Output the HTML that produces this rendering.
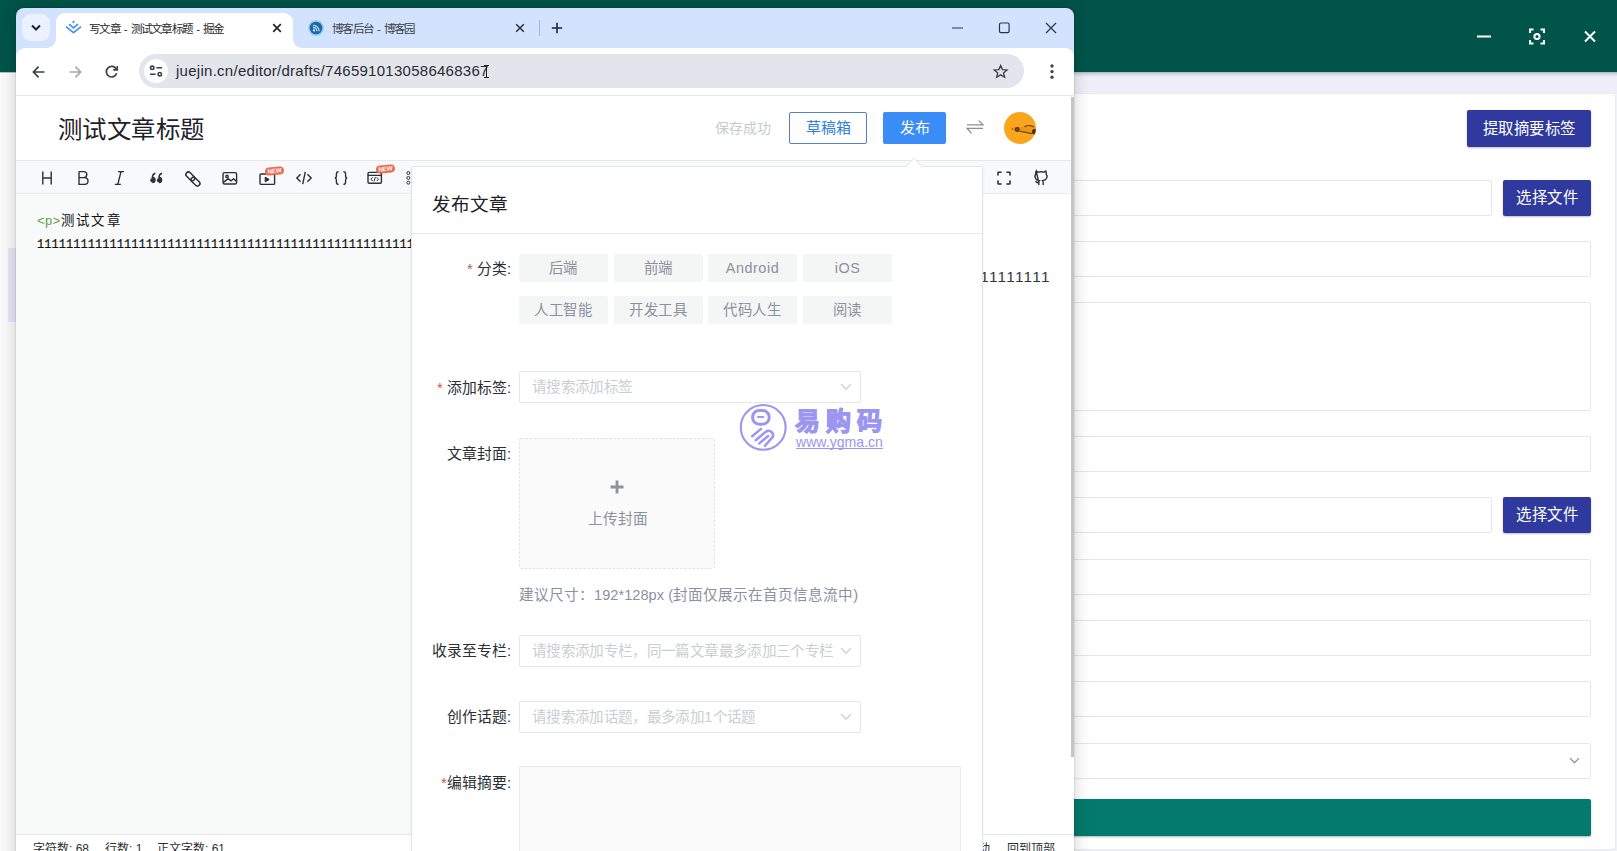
<!DOCTYPE html>
<html lang="zh-CN">
<head>
<meta charset="utf-8">
<title>写文章 - 测试文章标题 - 掘金</title>
<style>
*{box-sizing:border-box;margin:0;padding:0}
html,body{width:1617px;height:851px;overflow:hidden;background:#fff;font-family:"Liberation Sans",sans-serif;}
.abs{position:absolute}
#root{position:relative;width:1617px;height:851px;overflow:hidden;background:#f1f1f8}
/* ---------- background app (right / behind) ---------- */
#app-green{left:0;top:0;width:1617px;height:72.5px;background:#00544a}
#app-strip{left:0;top:73px;width:1617px;height:20px;background:#efeef9}
#app-strip-shadow{left:0;top:72px;width:1617px;height:5px;background:linear-gradient(#aab9b8,#d6dadf 45%,#efeef9)}
#app-card{left:0;top:93px;width:1616px;height:757px;background:#fff;border:1px solid #e9e9f0;border-left:0;border-radius:0 4px 4px 0}
#app-left{left:0;top:73px;width:16px;height:780px;background:#fafafa}
#app-left-sel{left:8px;top:248px;width:8px;height:74px;background:#e8e6f5}
.ibtn{background:#303a9e;color:#fff;font-size:15.4px;letter-spacing:.5px;text-align:center;border-radius:2px;box-shadow:0 1px 2px rgba(0,0,0,.25)}
.inp{border:1px solid #e6e6e6;border-radius:2px;background:#fff;left:1000px}
/* ---------- browser window ---------- */
#win{left:16px;top:8px;width:1058px;height:860px;border-radius:8px 8px 0 0;background:#d3e3fd;box-shadow:0 0 18px 1px rgba(0,0,0,.16),0 0 2px rgba(0,0,0,.28);overflow:hidden}
#tab1{left:40px;top:5px;width:237px;height:35px;background:#fff;border-radius:9px 9px 0 0}
#tab1:before,#tab1:after{content:"";position:absolute;bottom:0;width:9px;height:9px}
#tab1:before{left:-9px;background:radial-gradient(circle at 0 0,rgba(255,255,255,0) 8.5px,#fff 9px)}
#tab1:after{right:-9px;background:radial-gradient(circle at 100% 0,rgba(255,255,255,0) 8.5px,#fff 9px)}
#tabsearch{left:6px;top:6px;width:28px;height:27px;border-radius:9px;background:#ebf1fd}
.tabtxt{font-size:11.5px;color:#1f1f1f;white-space:nowrap;line-height:14px;letter-spacing:-.75px;word-spacing:1.5px}
#toolbar{left:0;top:40px;width:1058px;height:48px;background:#fff;border-radius:9px 9px 0 0;border-bottom:1px solid #e4e4e4}
#omni{left:123px;top:46px;width:885px;height:34px;border-radius:17px;background:#e2e5ec}
#omni-ic{left:128px;top:51px;width:24px;height:24px;border-radius:12px;background:#fff}
#url{left:160px;top:53px;font-size:15px;line-height:20px;color:#2a2c30;white-space:nowrap;letter-spacing:.27px}
/* ---------- page ---------- */
#page{left:0;top:88px;width:1058px;height:772px;background:#fff;overflow:hidden}
#ptitle{left:41.5px;top:17px;font-size:24.4px;letter-spacing:.6px;line-height:34px;color:#1d2129;white-space:nowrap}
#saved{left:699px;top:22px;font-size:14px;line-height:20px;color:#c6cacf;white-space:nowrap}
#draftbtn{left:773px;top:16px;width:78px;height:32px;border:1px solid #4d86c4;border-radius:2px;color:#2f7fe0;font-size:15px;line-height:30px;text-align:center;background:#fff}
#pubbtn{left:867px;top:16px;width:63px;height:32px;border-radius:2px;color:#fff;font-size:15px;line-height:32px;text-align:center;background:#3a8df6}
#avatar{left:987.5px;top:15.5px;width:32.6px;height:32.6px;border-radius:50%;background:#f9a61d;overflow:hidden}
#hline{left:0;top:64px;width:1058px;height:1px;background:#e6e7ea}
#tools{left:0;top:65px;width:1058px;height:33px;background:#f8f9fa;border-bottom:1px solid #e9ebee}
#edit{left:0;top:99px;width:1058px;height:640px;background:#f8faf9}
.mono{font-family:"Liberation Mono",monospace;font-size:12px;line-height:16px;color:#111;white-space:nowrap}
#status{left:0;top:738px;width:1058px;height:40px;background:#fff;border-top:1px solid #e6e7ea}
.st{font-size:12px;color:#2b2f36;line-height:14px;white-space:nowrap;top:746px}
#scroll{left:1055px;top:1px;width:3px;height:660px;background:#c4c5c7}
/* ---------- modal ---------- */
#modal{left:395px;top:71px;width:572px;height:720px;background:#fff;border:1px solid #e1e3e6;border-top-color:#fff;border-radius:2px;box-shadow:0 -1px 0 0 #e4e6e9,0 1px 4px rgba(0,0,0,.05)}
#mtitle{left:20px;top:24px;font-size:18.6px;line-height:26px;color:#1d2129;white-space:nowrap}
#mline{left:0;top:65px;width:570px;height:1px;background:#e8eaed}
.lab{font-size:14.8px;line-height:20px;color:#2a2e35;white-space:nowrap;text-align:right;width:120px;left:-21px;letter-spacing:0}
.lab i{font-style:normal;color:#c9554a}
.cat{width:89px;height:28px;background:#f4f5f5;border-radius:2px;color:#8a919f;font-size:14.4px;letter-spacing:.55px;line-height:28px;text-align:center;white-space:nowrap}
.sel{left:107px;width:342px;height:32px;border:1px solid #e5e6e9;border-radius:2px;background:#fff;font-size:14.5px;line-height:30px;color:#cacdd3;letter-spacing:.35px;padding-left:12px;white-space:nowrap;overflow:hidden}
.chev{position:absolute;right:8px;top:11px}
#cover{left:107px;top:270px;width:196px;height:131px;border-radius:2px;background:#fafafa}
#hint{left:107px;top:417px;font-size:14.6px;line-height:20px;color:#8a919f;white-space:nowrap;letter-spacing:.02px}
#summ{left:107px;top:598px;width:442px;height:130px;border:1px solid #e9eaec;border-radius:2px;background:#fafafa}
svg{display:block;overflow:visible}
.newb{background:#ef6a52;color:#fff;font-size:6.2px;line-height:8px;height:8px;padding:0 2.5px;border-radius:4px;font-weight:bold;transform:rotate(-6deg);letter-spacing:-.2px}
#wm{left:325px;top:233px;width:150px;height:52px}
</style>
</head>
<body>
<div id="root">
  <!-- background application -->
  <div class="abs" id="app-green"></div>
  <div class="abs" id="app-strip"></div>
  <div class="abs" id="app-strip-shadow"></div>
  <div class="abs" id="app-card"></div>
  <div class="abs" id="app-left"></div>
  <div class="abs" id="app-left-sel"></div>

  <!-- app window controls -->
  <svg class="abs" style="left:1470px;top:22px" width="140" height="30" viewBox="0 0 140 30" fill="none" stroke="#fff" stroke-width="2">
    <path d="M7 14.5H21"/>
    <path d="M60 11V7.5H63.5 M70.5 7.5H74V11 M74 18V21.5H70.5 M63.5 21.5H60V18"/>
    <circle cx="67" cy="14.5" r="2.6"/>
    <path d="M115 9.5L125 19.5M125 9.5L115 19.5"/>
  </svg>

  <!-- app form -->
  <div class="abs ibtn" style="left:1467px;top:110px;width:124px;height:37px;line-height:37px">提取摘要标签</div>
  <div class="abs inp" style="top:180px;width:492px;height:36px"></div>
  <div class="abs ibtn" style="left:1503px;top:180px;width:88px;height:36px;line-height:36px">选择文件</div>
  <div class="abs inp" style="top:241px;width:591px;height:36px"></div>
  <div class="abs inp" style="top:302px;width:591px;height:109px"></div>
  <div class="abs inp" style="top:436px;width:591px;height:36px"></div>
  <div class="abs inp" style="top:497px;width:492px;height:36px"></div>
  <div class="abs ibtn" style="left:1503px;top:497px;width:88px;height:36px;line-height:36px">选择文件</div>
  <div class="abs inp" style="top:559px;width:591px;height:36px"></div>
  <div class="abs inp" style="top:620px;width:591px;height:36px"></div>
  <div class="abs inp" style="top:681px;width:591px;height:36px"></div>
  <div class="abs inp" style="top:743px;width:591px;height:36px"></div>
  <svg class="abs" style="left:1567.5px;top:756px" width="13" height="10" viewBox="0 0 13 10" fill="none" stroke="#9e9e9e" stroke-width="1.5"><path d="M2 2.2L6.5 6.8L11 2.2"/></svg>
  <div class="abs" style="left:1000px;top:799px;width:591px;height:37px;background:#047a6c;border-radius:2px;box-shadow:0 1px 2px rgba(0,0,0,.3)"></div>

  <!-- browser window -->
  <div class="abs" id="win">
    <div class="abs" id="tabsearch"></div>
    <svg class="abs" style="left:14px;top:16px" width="12" height="8" viewBox="0 0 12 8" fill="none" stroke="#1f2430" stroke-width="2"><path d="M2 1.5L6 5.5L10 1.5"/></svg>
    <div class="abs" id="tab1"></div>
    <!-- juejin favicon -->
    <svg class="abs" style="left:49px;top:12px" width="17" height="14" viewBox="0 0 17 14" fill="none" stroke="#4a8fe8" stroke-width="1.7"><path d="M8.5 0.6L10 1.9L8.5 3.2L7 1.9Z" fill="#4a8fe8" stroke="none"/><path d="M4 4.2L8.5 7.8L13 4.2"/><path d="M1 6.6L8.5 12.6L16 6.6"/></svg>
    <div class="abs tabtxt" style="left:73px;top:13.6px">写文章 - 测试文章标题 - 掘金</div>
    <svg class="abs" style="left:256px;top:15px" width="10" height="10" viewBox="0 0 10 10" fill="none" stroke="#1f2430" stroke-width="1.7"><path d="M1.2 1.2L8.8 8.8M8.8 1.2L1.2 8.8"/></svg>
    <!-- cnblogs favicon -->
    <svg class="abs" style="left:292.3px;top:11.8px" width="16" height="16" viewBox="0 0 16 16"><circle cx="8" cy="8" r="7.7" fill="#86cdf5"/><circle cx="8" cy="8" r="6.3" fill="#1f68ae"/><circle cx="6" cy="10.4" r="1.1" fill="#e8f2fb"/><path d="M5 7.4A3.6 3.6 0 0 1 8.8 11.2 M5 5.2A5.8 5.8 0 0 1 11 11.2" fill="none" stroke="#dbe9f6" stroke-width="1.1"/></svg>
    <div class="abs tabtxt" style="left:316px;top:13.6px;color:#3a3f48">博客后台 - 博客园</div>
    <svg class="abs" style="left:499px;top:15px" width="10" height="10" viewBox="0 0 10 10" fill="none" stroke="#2b303b" stroke-width="1.5"><path d="M1.2 1.2L8.8 8.8M8.8 1.2L1.2 8.8"/></svg>
    <div class="abs" style="left:523px;top:12px;width:1px;height:16px;background:#a9b8d3"></div>
    <svg class="abs" style="left:535px;top:14px" width="12" height="12" viewBox="0 0 12 12" fill="none" stroke="#1f2430" stroke-width="1.6"><path d="M6 0.8V11.2M0.8 6H11.2"/></svg>
    <!-- window controls -->
    <svg class="abs" style="left:930px;top:12px" width="120" height="16" viewBox="0 0 120 16" fill="none" stroke="#2b3447" stroke-width="1.2"><path d="M6 8H17"/><rect x="53.5" y="3" width="9.6" height="9.6" rx="1.4"/><path d="M100 3L110 13M110 3L100 13"/></svg>

    <div class="abs" id="toolbar"></div>
    <!-- nav icons -->
    <svg class="abs" style="left:16px;top:57px" width="110" height="14" viewBox="0 0 110 14" fill="none" stroke-width="1.7">
      <path d="M12.5 7H1.8M6.6 1.6L1.4 7L6.6 12.4" stroke="#3b3f47"/>
      <path d="M37.5 7H48.2M43.4 1.6L48.6 7L43.4 12.4" stroke="#a4a8ae"/>
      <path d="M84.3 4.1A5.3 5.3 0 1 0 84.7 8.3" stroke="#3b3f47"/><path d="M85.3 0.9V4.9H81.3" stroke="#3b3f47" stroke-width="1.6"/>
    </svg>
    <div class="abs" id="omni"></div>
    <div class="abs" id="omni-ic"></div>
    <svg class="abs" style="left:133px;top:57px" width="14" height="12" viewBox="0 0 14 12" fill="none" stroke="#3b3f47" stroke-width="1.6"><circle cx="3.2" cy="2.8" r="1.7"/><path d="M7.4 2.8H13"/><circle cx="10.8" cy="9.2" r="1.7"/><path d="M1 9.2H6.6"/></svg>
    <div class="abs" id="url">juejin.cn/editor/drafts/7465910130586468367</div>
    <div class="abs" style="left:470px;top:57px;width:1px;height:13px;background:#222"></div>
    <div class="abs" style="left:468px;top:57px;width:5px;height:1px;background:#222"></div>
    <div class="abs" style="left:468px;top:69px;width:5px;height:1px;background:#222"></div>
    <svg class="abs" style="left:977px;top:55.5px" width="15.3" height="14.4" viewBox="0 0 17 16" fill="none" stroke="#3b3f47" stroke-width="1.5" stroke-linejoin="miter"><path d="M8.5 1.6L10.5 6.2L15.5 6.6L11.7 9.9L12.9 14.7L8.5 12.1L4.1 14.7L5.3 9.9L1.5 6.6L6.5 6.2Z"/></svg>
    <svg class="abs" style="left:1033px;top:56px" width="6" height="16" viewBox="0 0 6 16" fill="#3b3f47"><circle cx="3" cy="2" r="1.65"/><circle cx="3" cy="7.6" r="1.65"/><circle cx="3" cy="13.2" r="1.65"/></svg>

    <!-- page -->
    <div class="abs" id="page">
      <div class="abs" id="ptitle">测试文章标题</div>
      <div class="abs" id="saved">保存成功</div>
      <div class="abs" id="draftbtn">草稿箱</div>
      <div class="abs" id="pubbtn">发布</div>
      <svg class="abs" style="left:950px;top:23px" width="18" height="16" viewBox="0 0 18 16" fill="none" stroke="#8a8f99" stroke-width="1.3"><path d="M1 5.9H17L12.8 1.6"/><path d="M17 9.3H1L5.6 14.4"/></svg>
      <div class="abs" id="avatar">
        <svg width="33" height="33" viewBox="0 0 33 33"><path d="M6.6 17L11.4 15.2L19.6 14.9C22 12.6 27.6 12.6 30.6 15.4L33.4 17.4V21.6L28 21.6L16 19.6L9.6 18.8Z" fill="#ec9712"/><path d="M20.4 14.9C22.8 12.9 27.4 12.9 30 15.2" stroke="#5a3c10" stroke-width="1.1" fill="none"/><path d="M15.4 19.2L28 21.6" stroke="#6b4a14" stroke-width="1.2"/><circle cx="13.2" cy="17.5" r="2.4" fill="#4a3210"/><circle cx="13.2" cy="17.5" r="1" fill="#8a6a30"/><circle cx="30.6" cy="19.8" r="2.7" fill="#4a3210"/><circle cx="8.4" cy="16.9" r=".7" fill="#6b4a14"/></svg>
      </div>
      <div class="abs" id="hline"></div>
      <div class="abs" id="tools">
        <!-- H B I -->
        <svg class="abs" style="left:24px;top:7px" width="400" height="20" viewBox="0 0 400 20" fill="none" stroke="#2b2f36" stroke-width="1.4">
          <path d="M2.8 3.6V16.4M11.2 3.6V16.4M2.8 10H11.2"/>
          <path d="M39 3.6V16.4H44.6A3.4 3.4 0 0 0 44.6 9.6H39M39 9.6H43.8A3 3 0 0 0 43.8 3.6H39"/>
          <path d="M78 3.6H84M74.8 16.4H80.8M81 3.6L77.8 16.4"/>
          <g transform="translate(1.2 0)"><path d="M111.2 14.6A2.5 2.5 0 1 0 111.2 9.6C111.2 7.4 112.4 5.8 114.2 5.2M117.8 14.6A2.5 2.5 0 1 0 117.8 9.6C117.8 7.4 119 5.8 120.8 5.2" stroke-width="1.5"/>
          <circle cx="111.4" cy="12.2" r="2.3" fill="#2b2f36" stroke="none"/><circle cx="118" cy="12.2" r="2.3" fill="#2b2f36" stroke="none"/></g>
          <g stroke-width="1.5" transform="translate(1.5 0)"><rect x="143.6" y="5.9" width="10.4" height="5" rx="2.5" transform="rotate(45 148.8 8.4)"/><rect x="148.8" y="11.1" width="10.4" height="5" rx="2.5" transform="rotate(45 154 13.6)"/></g>
          <rect x="183" y="4.6" width="13.6" height="11.4" rx="1.6"/><circle cx="187" cy="8.4" r="1.2"/><path d="M183.4 14.4L188.2 10.6L191 12.8L193.6 10.8L196.4 13.2"/>
          <rect x="220" y="6" width="14.6" height="10.4" rx="1.2"/><path d="M225.2 9.2V13.8L229.2 11.5Z" fill="#2b2f36" stroke-width="1"/>
          <path transform="translate(-1.2 -.4)" d="M261.8 6.6L258 10.4L261.8 14.2M268.6 6.6L272.4 10.4L268.6 14.2M266.5 4.2L263.9 16.6"/>
          <path d="M298.6 3.6C296.6 3.6 296.4 4.6 296.4 6V8C296.4 9.2 295.8 10 294.8 10C295.8 10 296.4 10.8 296.4 12V14C296.4 15.4 296.6 16.4 298.6 16.4M303.4 3.6C305.4 3.6 305.6 4.6 305.6 6V8C305.6 9.2 306.2 10 307.2 10C306.2 10 305.6 10.8 305.6 12V14C305.6 15.4 305.4 16.4 303.4 16.4"/>
          <rect x="328" y="4.4" width="13.4" height="10.8" rx="1.2"/><path d="M328 7.4H341.4" /><path d="M332.6 9.4L331 11.2L332.6 13M336.8 9.4L338.4 11.2L336.8 13M335.4 9L334 13.4" stroke-width="1"/>
        </svg>
        <div class="abs newb" style="left:249px;top:6px">NEW</div>
        <div class="abs newb" style="left:360px;top:3.5px">NEW</div>
        <svg class="abs" style="left:389px;top:7px" width="6" height="18" viewBox="0 0 6 18" fill="none" stroke="#2b2f36" stroke-width=".95"><circle cx="3.3" cy="5" r="1.5"/><circle cx="3.3" cy="9.9" r="1.5"/><circle cx="3.3" cy="14.7" r="1.5"/></svg>
        <svg class="abs" style="left:980px;top:9px" width="16" height="16" viewBox="0 0 16 16" fill="none" stroke="#2b2f36" stroke-width="1.6"><path d="M2 5.6V2.6Q2 2.2 2.4 2.2H5.6M10.4 2.2H13.6Q14 2.2 14 2.6V5.6M14 10.6V13.6Q14 14 13.6 14H10.4M5.6 14H2.4Q2 14 2 13.6V10.6"/></svg>
        <svg class="abs" style="left:1017px;top:8px" width="16" height="17" viewBox="0 0 16 17" fill="none" stroke="#2b2f36" stroke-width="1.4"><path d="M3.2 2L5 3.2C7 2.6 9 2.6 11 3.2L12.8 2C13.4 3.2 13.4 4.2 13.2 5C14.2 6.2 14.2 7.8 13.6 9.2C12.8 10.8 11.4 11.4 9.6 11.6C10.4 12.4 10.2 13.4 10.2 16M5.8 16V13.6C4.4 14 3.4 13.6 2.6 12.2M5.8 13.6C5.8 12.8 5.8 12.2 6.4 11.6C4.6 11.4 3.2 10.8 2.4 9.2C1.8 7.8 1.8 6.2 2.8 5C2.6 4.2 2.6 3.2 3.2 2Z"/></svg>
      </div>
      <div class="abs" id="edit">
        <div class="abs" style="left:529px;top:0;width:529px;height:640px;background:#fff;border-left:1px solid #eceef0"></div>
        <div class="abs mono" style="left:21px;top:18.5px;font-size:12.9px"><span style="color:#5f9e4b">&lt;p&gt;</span><span style="letter-spacing:2.3px;font-size:13.4px;margin-left:.5px">测试文章</span></div>
        <div class="abs mono" style="left:21px;top:42px;-webkit-text-stroke:.2px #111;letter-spacing:.05px">1111111111111111111111111111111111111111111111111111111111</div>
        <div class="abs" style="left:868.8px;top:72.4px;font-size:15.4px;line-height:20px;letter-spacing:1.26px;color:#33373d;white-space:nowrap">1111111111111111111</div>
      </div>
      <div class="abs" id="status"></div>
      <div class="abs st" style="left:17px">字符数: 68</div>
      <div class="abs st" style="left:89px">行数: 1</div>
      <div class="abs st" style="left:141px">正文字数: 61</div>
      <div class="abs st" style="left:925.5px;font-size:12px">同步滚动</div>
      <div class="abs st" style="left:991px;font-size:12px">回到顶部</div>
      <div class="abs" id="scroll"></div>
      <div class="abs" id="modal">
        <div class="abs" id="mtitle">发布文章</div>
        <div class="abs" id="mline"></div>
        <div class="abs lab" style="top:91px"><i>*</i> 分类:</div>
        <div class="abs cat" style="left:107px;top:86px">后端</div>
        <div class="abs cat" style="left:202px;top:86px">前端</div>
        <div class="abs cat" style="left:296px;top:86px">Android</div>
        <div class="abs cat" style="left:391px;top:86px">iOS</div>
        <div class="abs cat" style="left:107px;top:128px">人工智能</div>
        <div class="abs cat" style="left:202px;top:128px">开发工具</div>
        <div class="abs cat" style="left:296px;top:128px">代码人生</div>
        <div class="abs cat" style="left:391px;top:128px">阅读</div>
        <div class="abs lab" style="top:210px"><i>*</i> 添加标签:</div>
        <div class="abs sel" style="top:203px">请搜索添加标签<svg class="chev" width="12" height="8" viewBox="0 0 12 8" fill="none" stroke="#c5c8ce" stroke-width="1.2"><path d="M1 1.2L6 6.2L11 1.2"/></svg></div>
        <div class="abs lab" style="top:276px">文章封面:</div>
        <div class="abs" id="cover">
          <svg class="abs" style="left:0;top:0" width="196" height="131" viewBox="0 0 196 131" fill="none"><rect x=".5" y=".5" width="195" height="130" rx="2" stroke="#dcdee2" stroke-width="1" stroke-dasharray="2.2 2"/></svg>
          <svg class="abs" style="left:91.3px;top:42px" width="14" height="14" viewBox="0 0 14 14" fill="none" stroke="#8e929b" stroke-width="2.8"><path d="M7 0.5V13.5M0.5 7H13.5"/></svg>
          <div class="abs" style="left:0;top:71px;width:197px;text-align:center;font-size:14.7px;line-height:20px;color:#8a919f">上传封面</div>
        </div>
        <div class="abs" id="hint">建议尺寸：192*128px (封面仅展示在首页信息流中)</div>
        <div class="abs lab" style="top:473px">收录至专栏:</div>
        <div class="abs sel" style="top:467px">请搜索添加专栏，同一篇文章最多添加三个专栏<svg class="chev" width="12" height="8" viewBox="0 0 12 8" fill="none" stroke="#c5c8ce" stroke-width="1.2"><path d="M1 1.2L6 6.2L11 1.2"/></svg></div>
        <div class="abs lab" style="top:539px">创作话题:</div>
        <div class="abs sel" style="top:533px">请搜索添加话题，最多添加1个话题<svg class="chev" width="12" height="8" viewBox="0 0 12 8" fill="none" stroke="#c5c8ce" stroke-width="1.2"><path d="M1 1.2L6 6.2L11 1.2"/></svg></div>
        <div class="abs lab" style="top:605px"><i>*</i>编辑摘要:</div>
        <div class="abs" id="summ"></div>
        <!-- watermark -->
        <div class="abs" id="wm">
          <svg width="150" height="52" viewBox="0 0 150 52" fill="none" stroke="#9a96f1" stroke-linecap="round"><circle cx="26.2" cy="26.4" r="22.4" stroke-width="2.1"/><rect x="15.6" y="9.4" width="16.6" height="13.8" rx="6.6" stroke-width="3"/><path d="M21 16H26.4" stroke-width="2"/><path d="M15.2 35.2L24 27.9M18.7 39.3L28.6 30.9C31.6 28.6 36.6 30.2 36 35.6L28 44.8M22.3 42.4L31.2 35" stroke-width="2.5"/></svg>
          <div class="abs" style="left:57.5px;top:4px;font-size:25px;line-height:32px;font-weight:900;color:#9a96f1;-webkit-text-stroke:1.1px #9a96f1;letter-spacing:6.4px;white-space:nowrap">易购码</div>
          <div class="abs" style="left:59px;top:32.5px;font-size:14.1px;line-height:16px;color:#9a96f1;text-decoration:underline;text-decoration-skip-ink:none;white-space:nowrap">www.ygma.cn</div>
        </div>
      </div>
      <svg class="abs" style="left:888px;top:60px" width="20" height="12" viewBox="0 0 20 12"><path d="M1 11.5L10 2.2L19 11.5" fill="#fff" stroke="#e1e3e6" stroke-width="1"/><path d="M0 11.5H20V13H0Z" fill="#fff"/></svg>
    </div>
  </div>
</div>
</body>
</html>
